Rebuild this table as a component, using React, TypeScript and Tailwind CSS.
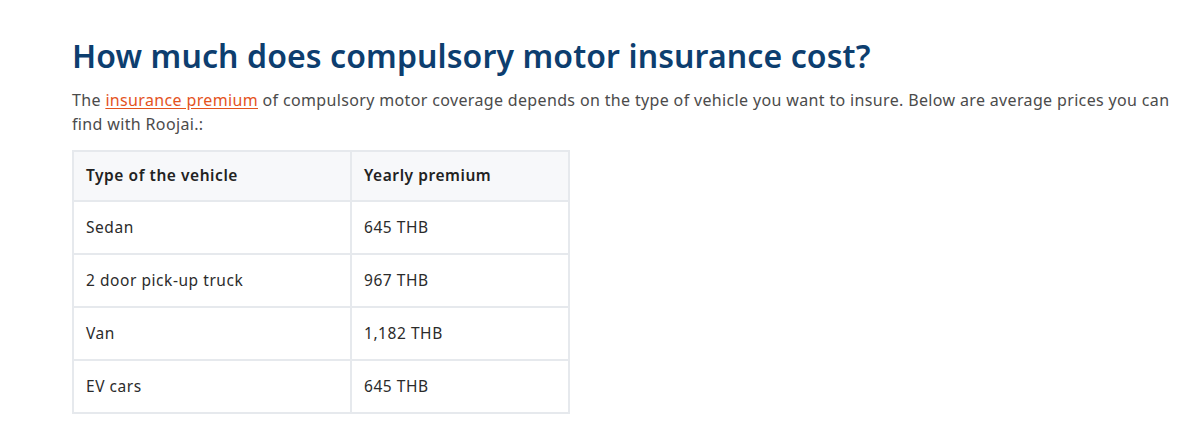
import React from "react";

const rows = [
  ["Sedan", "645 THB"],
  ["2 door pick-up truck", "967 THB"],
  ["Van", "1,182 THB"],
  ["EV cars", "645 THB"],
];

export default function App() {
  return (
    <div className="w-[1200px] h-[441px] bg-white pl-[72px] pr-[26px] pt-[34px]" style={{ fontFamily: '"Noto Sans", sans-serif' }}>
      <h2 className="text-[32px] leading-[44px] font-semibold tracking-[0.1px] text-[#0d3e6f]">How much does compulsory motor insurance cost?</h2>
      <p className="mt-[10px] text-[16px] leading-[24px] tracking-[0.35px] text-[#4b4b4b]">
        The <a className="text-[#e4531d] underline underline-offset-2">insurance premium</a> of compulsory motor coverage depends on the type of vehicle you want to insure. Below are average prices you can find with Roojai.:
      </p>
      <table className="mt-[14px] w-[498px] border-collapse text-[15.5px] tracking-[0.55px] text-[#2b2b2b]">
        <thead>
          <tr className="bg-[#f7f8fa]">
            <th className="h-[50px] w-[278px] border-2 border-[#e6e9ed] px-[12px] text-left font-semibold text-[#222]">Type of the vehicle</th>
            <th className="h-[50px] border-2 border-[#e6e9ed] px-[12px] text-left font-semibold text-[#222]">Yearly premium</th>
          </tr>
        </thead>
        <tbody>
          {rows.map((r) => (
            <tr key={r[0]}>
              <td className="h-[53px] border-2 border-[#e6e9ed] px-[12px]">{r[0]}</td>
              <td className="h-[53px] border-2 border-[#e6e9ed] px-[12px]">{r[1]}</td>
            </tr>
          ))}
        </tbody>
      </table>
    </div>
  );
}
